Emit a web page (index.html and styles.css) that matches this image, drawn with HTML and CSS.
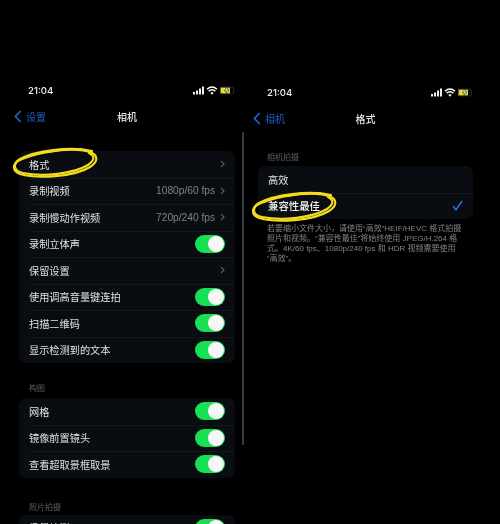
FILE: index.html
```html
<!DOCTYPE html>
<html lang="zh">
<head>
<meta charset="utf-8">
<title>相机设置</title>
<link rel="stylesheet" href="styles.css">
</head>
<body>
<div class="screens">
  <section class="phone phone-left">
    <div class="status">
      <span class="time">21:04</span>
      <svg class="status-icons" width="41" height="9" viewBox="0 0 41 9"><use href="#status"/></svg>
    </div>
    <div class="nav">
      <span class="back"><svg class="chev-back" width="8" height="13" viewBox="0 0 8 13"><path d="M6.8 1 1.4 6.500l5.400 5.500" fill="none" stroke="#1c66d8" stroke-width="1.700"/></svg>设置</span>
      <span class="title">相机</span>
    </div>
    <div class="list first-list">
      <div class="row"><span>格式</span><span class="val"><svg class="chev" width="5" height="8" viewBox="0 0 5 8"><path d="M1 1l3 3-3 3" /></svg></span></div>
      <div class="row"><span>录制视频</span><span class="val">1080p/60 fps<svg class="chev" width="5" height="8" viewBox="0 0 5 8"><path d="M1 1l3 3-3 3" /></svg></span></div>
      <div class="row"><span>录制慢动作视频</span><span class="val">720p/240 fps<svg class="chev" width="5" height="8" viewBox="0 0 5 8"><path d="M1 1l3 3-3 3" /></svg></span></div>
      <div class="row"><span>录制立体声</span><span class="toggle"></span></div>
      <div class="row"><span>保留设置</span><span class="val"><svg class="chev" width="5" height="8" viewBox="0 0 5 8"><path d="M1 1l3 3-3 3" /></svg></span></div>
      <div class="row"><span>使用调高音量键连拍</span><span class="toggle"></span></div>
      <div class="row"><span>扫描二维码</span><span class="toggle"></span></div>
      <div class="row"><span>显示检测到的文本</span><span class="toggle"></span></div>
    </div>
    <div class="label label-comp">构图</div>
    <div class="list">
      <div class="row"><span>网格</span><span class="toggle"></span></div>
      <div class="row"><span>镜像前置镜头</span><span class="toggle"></span></div>
      <div class="row"><span>查看超取景框取景</span><span class="toggle"></span></div>
    </div>
    <div class="label label-photo">照片拍摄</div>
    <div class="list">
      <div class="row"><span>场景检测</span><span class="toggle"></span></div>
    </div>
  </section>

  <div class="scrollbar"></div>

  <section class="phone phone-right">
    <div class="status">
      <span class="time">21:04</span>
      <svg class="status-icons" width="41" height="9" viewBox="0 0 41 9"><use href="#status"/></svg>
    </div>
    <div class="nav">
      <span class="back"><svg class="chev-back" width="8" height="13" viewBox="0 0 8 13"><path d="M6.8 1 1.4 6.500l5.400 5.500" fill="none" stroke="#1c66d8" stroke-width="1.700"/></svg>相机</span>
      <span class="title">格式</span>
    </div>
    <div class="label label-capture">相机拍摄</div>
    <div class="list">
      <div class="row"><span>高效</span></div>
      <div class="row"><span class="selected">兼容性最佳</span><svg class="check" width="11" height="11" viewBox="0 0 11 11"><path d="M1 6.200 4 9.600 10 1" fill="none" stroke="#1d6fe6" stroke-width="1.600"/></svg></div>
    </div>
    <p class="note">
      <span>若要缩小文件大小，请使用“高效”HEIF/HEVC 格式拍摄</span>
      <span>照片和视频。“兼容性最佳”将始终使用 JPEG/H.264 格</span>
      <span>式。4K/60 fps、1080p/240 fps 和 HDR 视频需要使用</span>
      <span>“高效”。</span>
    </p>
  </section>

  <svg class="mark mark-one" width="90" height="34" viewBox="0 0 90 34"><use href="#scribble"/></svg>
  <svg class="mark mark-two" width="90" height="34" viewBox="0 0 90 34"><use href="#scribble"/></svg>
</div>

<svg class="defs" width="0" height="0">
  <defs>
    <g id="scribble" fill="none" stroke="#f2dc1e" stroke-width="2.200" stroke-linecap="round">
      <path d="M81 5C58 0 24 5 9 13 1 18 1 25 9 28c17 5 54 3 70-7 8-5 8-11 2-14C72 3 54 3 36 6"/>
      <path d="M70 3C46 3 20 8 7 15 2 19 3 25 12 27c20 4 50 1 65-8 7-5 7-9 1-12"/>
    </g>
    <g id="status">
      <rect x="0" y="6" width="2" height="2.500" fill="#eee"/>
      <rect x="3" y="4.500" width="2" height="4" fill="#eee"/>
      <rect x="6" y="2.500" width="2" height="6" fill="#eee"/>
      <rect x="9" y="0.500" width="2" height="8" fill="#eee"/>
      <path d="M14 3.200c3-2.600 7-2.600 10 0M15.600 5.200c2-1.600 4.800-1.600 6.800 0" fill="none" stroke="#fff" stroke-width="1.500"/>
      <path d="M17.200 6.800 19 8.800l1.800-2c-1-.7-2.600-.7-3.600 0z" fill="#fff"/>
      <rect x="27" y="1.200" width="10" height="6.600" rx="1.200" fill="#e8dc3c"/>
      <rect x="27.500" y="1.200" width="13" height="6.600" rx="2" fill="none" stroke="#3a3a3a" stroke-width=".8"/>
      <path d="M34.500 0 31.500 5h2l-1 4 3.500-5.200h-2z" fill="#fff" stroke="#000" stroke-width=".5"/>
    </g>
  </defs>
</svg>
</body>
</html>
```
FILE: styles.css
```css
* { box-sizing: border-box; }
html, body { margin: 0; height: 100%; background: #000; }
body { overflow: hidden; font-family: "Noto Sans CJK SC", "Liberation Sans", sans-serif; color: #d8d8d8; }

.screens { position: relative; display: flex; width: 500px; height: 524px; overflow: hidden; filter: blur(0.35px); }

.phone { flex: none; }
.phone-left { width: 216px; margin-left: 19px; padding-top: 83px; }
.phone-right { width: 215px; margin-left: 14px; padding-top: 85px; }

.scrollbar { flex: none; width: 2px; height: 313px; margin: 132px 0 0 7px; background: #3a3c40; border-radius: 1px; }

.status { display: flex; justify-content: space-between; align-items: center; height: 14px; padding: 0 1px 0 9px; }
.time { font-family: "Inter", "Liberation Sans", sans-serif; font-size: 9.6px; font-weight: 500; color: #f0f0f0; }
.status-icons { display: block; }

.nav { position: relative; display: flex; justify-content: center; align-items: center; height: 24px; margin-top: 7px; }
.back { position: absolute; left: -5px; display: flex; align-items: center; gap: 4px; font-size: 10px; color: #1c5fc4; }
.title { font-size: 10px; font-weight: 500; color: #e6e6e6; }

.first-list { margin-top: 23px; }

.list { background: #090c10; border-radius: 7px; overflow: hidden; }
.row { position: relative; display: flex; justify-content: space-between; align-items: center; height: 26.5px; padding: 0 10px; font-size: 10.2px; color: #e2e2e2; }
.row + .row::before { content: ""; position: absolute; top: 0; left: 10px; right: 0; height: 1px; background: #14171b; }
.selected { font-size: 10.4px; font-weight: 500; color: #f4f4f4; }

.val { display: flex; align-items: center; gap: 5px; font-family: "Liberation Sans", sans-serif; font-size: 10.2px; color: #808387; }
.chev { display: block; }
.chev path { fill: none; stroke: #55585c; stroke-width: 1.2; }

.toggle { position: relative; width: 30px; height: 18px; border-radius: 9px; background: #17e055; }
.toggle::after { content: ""; position: absolute; top: 1px; right: 1px; width: 16px; height: 16px; border-radius: 50%; background: #f6f6f6; }

.label { height: 10px; padding-left: 10px; font-size: 8px; line-height: 10px; color: #5c5e62; }
.label-comp { margin-top: 20px; margin-bottom: 5px; }
.label-photo { margin-top: 24px; margin-bottom: 3px; }
.label-capture { margin-top: 22px; margin-bottom: 4px; padding-left: 9px; }

.note { margin: 5px 0 0; padding-left: 9px; font-family: "Liberation Sans", "Noto Sans CJK SC", sans-serif; font-size: 8px; line-height: 10px; color: #808387; white-space: nowrap; }
.note span { display: block; }

.mark { position: absolute; }
.mark-one { left: 11px; top: 146px; }
.mark-two { left: 250px; top: 190px; }

.defs { position: absolute; }
```
